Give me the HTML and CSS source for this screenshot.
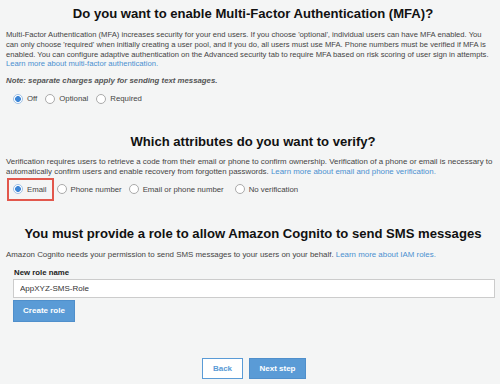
FILE: index.html
```html
<!DOCTYPE html>
<html lang="en">
<head>
    <meta charset="UTF-8">
    <meta name="viewport" content="width=device-width, initial-scale=1.0">
    <title>Cognito - MFA and verifications</title>
    <link rel="stylesheet" href="styles.css">
</head>
<body>
    <div class="page">
        <section class="block mfa">
            <h2 class="title">Do you want to enable Multi-Factor Authentication (MFA)?</h2>
            <p class="desc">Multi-Factor Authentication (MFA) increases security for your end users. If you choose 'optional', individual users can have MFA enabled. You<br>
                can only choose 'required' when initially creating a user pool, and if you do, all users must use MFA. Phone numbers must be verified if MFA is<br>
                enabled. You can configure adaptive authentication on the Advanced security tab to require MFA based on risk scoring of user sign in attempts.<br>
                <a href="#">Learn more about multi-factor authentication.</a></p>
            <p class="note">Note: separate charges apply for sending text messages.</p>
            <div class="options">
                <label class="opt"><input type="radio" name="mfa" checked> Off</label>
                <label class="opt"><input type="radio" name="mfa"> Optional</label>
                <label class="opt"><input type="radio" name="mfa"> Required</label>
            </div>
        </section>

        <section class="block verify">
            <h2 class="title">Which attributes do you want to verify?</h2>
            <p class="desc">Verification requires users to retrieve a code from their email or phone to confirm ownership. Verification of a phone or email is necessary to automatically confirm users and enable recovery from forgotten passwords. <a href="#">Learn more about email and phone verification.</a></p>
            <div class="options">
                <label class="opt highlight"><input type="radio" name="verify" checked> Email</label>
                <label class="opt"><input type="radio" name="verify"> Phone number</label>
                <label class="opt"><input type="radio" name="verify"> Email or phone number</label>
                <label class="opt"><input type="radio" name="verify"> No verification</label>
            </div>
        </section>

        <section class="block role">
            <h2 class="title">You must provide a role to allow Amazon Cognito to send SMS messages</h2>
            <p class="desc">Amazon Cognito needs your permission to send SMS messages to your users on your behalf. <a href="#">Learn more about IAM roles.</a></p>
            <label class="field-label" for="role-name">New role name</label>
            <input type="text" id="role-name" class="field" value="AppXYZ-SMS-Role">
            <button class="btn primary">Create role</button>
        </section>

        <div class="nav">
            <button class="btn secondary">Back</button>
            <button class="btn primary">Next step</button>
        </div>
    </div>
</body>
</html>
```

FILE: styles.css
```css
body {
    margin: 0;
    background-color: #f4f5f5;
    font-family: "Liberation Sans", Arial, sans-serif;
    color: #444;
}

.page {
    padding: 0 6px;
}

.block {
    margin: 0;
}

.title {
    margin: 0;
    padding-left: 6px;
    font-size: 13.1px;
    font-weight: bold;
    color: #111;
    text-align: center;
    line-height: 18px;
    white-space: nowrap;
}

.mfa .title {
    padding-top: 5px;
}

.verify .title {
    margin-top: 25px;
}

.role .title {
    margin-top: 26px;
}

.desc {
    margin: 7px 0 0;
    font-size: 7.9px;
    line-height: 9.8px;
}

.mfa .desc {
    font-size: 7.65px;
}

.verify .desc {
    margin-top: 6px;
}

.role .desc {
    margin-top: 7px;
}

.desc a {
    color: #4a90d0;
    text-decoration: none;
}

.note {
    margin: 7px 0 0;
    font-size: 7.8px;
    line-height: 9px;
    font-style: italic;
    font-weight: bold;
    color: #555;
}

.options {
    display: flex;
    gap: 8px;
    margin-top: 4px;
    padding-left: 7px;
}

.verify .options {
    margin-top: 3px;
    gap: 7px;
}

.verify .opt:nth-child(2) {
    margin-left: -2px;
}

.verify .opt:nth-child(4) {
    margin-left: 4px;
}

.opt {
    display: flex;
    align-items: center;
    gap: 4px;
    font-size: 7.8px;
    color: #444;
    height: 19px;
}

.opt input {
    appearance: none;
    -webkit-appearance: none;
    width: 10px;
    height: 10px;
    margin: 0;
    border: 1px solid #aaa;
    border-radius: 50%;
    background: #fff;
    box-sizing: border-box;
}

.opt input:checked {
    border-color: #9fc1e6;
    background: radial-gradient(circle, #3d86d6 0, #3d86d6 2.6px, #fff 3.2px);
}

.highlight {
    outline: 2px solid #e2574c;
    outline-offset: 0;
    margin-left: -4px;
    padding: 0 5px 0 4px;
    box-shadow: 0 0 2px rgba(0, 0, 0, 0.25);
}

.field-label {
    display: block;
    margin: 8px 0 0 8px;
    font-size: 7.8px;
    line-height: 9px;
    font-weight: bold;
    color: #222;
}

.field {
    display: block;
    box-sizing: border-box;
    width: 482px;
    height: 19px;
    margin: 2px 0 0 7px;
    padding: 0 6px;
    border: 1px solid #ccc;
    background: #fff;
    font-family: inherit;
    font-size: 8px;
    color: #333;
}

.btn {
    font-family: inherit;
    font-size: 8px;
    border-radius: 0;
    cursor: pointer;
    height: 22px;
}

.role .btn {
    display: block;
    margin: 2px 0 0 7px;
    width: 62px;
}

.primary {
    background-color: #5a9bd6;
    border: 1px solid #4f8fcb;
    color: #fff;
    font-weight: bold;
}

.secondary {
    background-color: #fff;
    border: 1px solid #5a9bd6;
    color: #5a9bd6;
    font-weight: bold;
    width: 41px;
}

.nav {
    display: flex;
    justify-content: center;
    gap: 6px;
    margin-top: 36px;
    padding-left: 8px;
}

.nav .btn {
    height: 21px;
}

.nav .primary {
    width: 57px;
}
```
